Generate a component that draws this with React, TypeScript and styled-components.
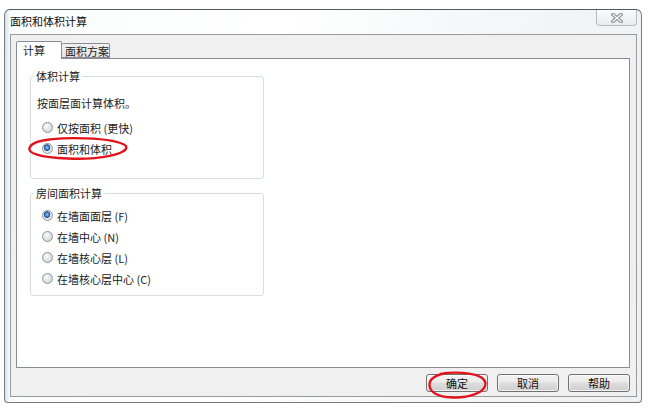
import React from 'react'
import styled, { createGlobalStyle } from 'styled-components'

const GlobalStyle = createGlobalStyle`
    html, body {
        margin: 0;
        padding: 0;
        background: #ffffff;
    }
    body {
        font-family: "Noto Sans CJK SC", "Liberation Sans", sans-serif;
        font-size: 11px;
        color: #1b1b1b;
    }
`

export default function App() {
    return (
        <Screen>
            <GlobalStyle />
            <Window>
                <TitleBar>
                    <Title>面积和体积计算</Title>
                    <CloseButton aria-label="关闭">
                        <svg width="12" height="10" viewBox="0 0 12 10">
                            <path d="M2 1.5 L10 8.5 M10 1.5 L2 8.5" stroke="#8a8e95" strokeWidth="3.6" strokeLinecap="square" />
                            <path d="M2 1.5 L10 8.5 M10 1.5 L2 8.5" stroke="#f6f6f6" strokeWidth="1.4" strokeLinecap="square" />
                        </svg>
                    </CloseButton>
                </TitleBar>
                <Panel>
                    <TabStrip>
                        <Tab $active>计算</Tab>
                        <Tab>面积方案</Tab>
                    </TabStrip>
                    <TabBody>
                        <GroupBox $height={110}>
                            <Legend>体积计算</Legend>
                            <Note>按面层面计算体积。</Note>
                            <RadioList $top={7}>
                                <RadioRow>
                                    <Radio />
                                    <span>仅按面积 (更快)</span>
                                </RadioRow>
                                <RadioRow>
                                    <Radio $checked />
                                    <span>面积和体积</span>
                                    <Mark $left={-9} $top={-1} $w={100} $h={23}>
                                        <svg width="100%" height="100%" viewBox="0 0 100 23" preserveAspectRatio="none">
                                            <path d="M8 5 C 30 -1, 88 0, 98 9 C 102 17, 70 23, 40 21.5 C 12 20.5, -2 16, 2 10 C 4 6, 12 3.5, 22 2.5" fill="none" stroke="#e3121b" strokeWidth="2.3" />
                                        </svg>
                                    </Mark>
                                </RadioRow>
                            </RadioList>
                        </GroupBox>
                        <GroupBox $height={110}>
                            <Legend>房间面积计算</Legend>
                            <RadioList $top={5}>
                                <RadioRow>
                                    <Radio $checked />
                                    <span>在墙面面层 (F)</span>
                                </RadioRow>
                                <RadioRow>
                                    <Radio />
                                    <span>在墙中心 (N)</span>
                                </RadioRow>
                                <RadioRow>
                                    <Radio />
                                    <span>在墙核心层 (L)</span>
                                </RadioRow>
                                <RadioRow>
                                    <Radio />
                                    <span>在墙核心层中心 (C)</span>
                                </RadioRow>
                            </RadioList>
                        </GroupBox>
                    </TabBody>
                    <ButtonRow>
                        <Button>
                            确定
                            <Mark $left={1} $top={-4} $w={59} $h={28}>
                                <svg width="100%" height="100%" viewBox="0 0 59 28" preserveAspectRatio="none">
                                    <path d="M12 3 C 30 0, 56 2, 57.5 12 C 58 22, 40 27, 25 26.5 C 8 26, 1 20, 1.5 13 C 2 7, 8 4, 18 2" fill="none" stroke="#e3121b" strokeWidth="2.3" />
                                </svg>
                            </Mark>
                        </Button>
                        <Button>取消</Button>
                        <Button>帮助</Button>
                    </ButtonRow>
                </Panel>
            </Window>
        </Screen>
    )
}

const Screen = styled.div`
    width: 652px;
    height: 410px;
    padding: 9px 0 0 4px;
    box-sizing: border-box;
`
const Window = styled.div`
    width: 638px;
    height: 394px;
    box-sizing: border-box;
    display: flex;
    flex-direction: column;
    padding: 0 4px 5px 5px;
    border: 1px solid #7a7a7a;
    border-top-color: #555a60;
    border-radius: 6px 6px 4px 4px;
    background:
        linear-gradient(90deg, rgba(170, 205, 240, 0.55) 0px, rgba(255, 255, 255, 0) 5px),
        linear-gradient(100deg, #fbfcfd 0%, #ffffff 40%, #f4f6f7 70%, #eef0f1 100%);
`
const TitleBar = styled.div`
    height: 24px;
    display: flex;
    justify-content: space-between;
    align-items: flex-start;
`
const Title = styled.div`
    align-self: center;
    padding-bottom: 3px;
    font-size: 11px;
    color: #111;
`
const CloseButton = styled.div`
    width: 41px;
    height: 16px;
    box-sizing: border-box;
    display: flex;
    align-items: center;
    justify-content: center;
    border: 1px solid #b7bcc2;
    border-top: none;
    border-radius: 0 0 4px 4px;
    background: linear-gradient(#fafbfc, #e9ecef);
`
const Panel = styled.div`
    flex: 1;
    display: flex;
    flex-direction: column;
    padding: 6px 6px 4px 5px;
    border: 1px solid #9a9a9a;
    background: #f0f0f0;
`
const TabStrip = styled.div`
    height: 17px;
    display: flex;
    align-items: flex-end;
    position: relative;
    z-index: 1;
`
const Tab = styled.div<{ $active?: boolean }>`
    box-sizing: border-box;
    display: flex;
    align-items: center;
    height: ${p => (p.$active ? 18 : 15)}px;
    margin-bottom: ${p => (p.$active ? -1 : 0)}px;
    padding: ${p => (p.$active ? '0 0 2px 6px' : '0 0 0 3px')};
    width: ${p => (p.$active ? 46 : 48)}px;
    border: 1px solid #898c95;
    border-bottom: ${p => (p.$active ? 'none' : '1px solid #898c95')};
    border-left: ${p => (p.$active ? '1px solid #898c95' : 'none')};
    border-radius: 2px 2px 0 0;
    background: ${p => (p.$active ? '#ffffff' : 'linear-gradient(#f2f2f2, #e4e4e4)')};
    line-height: 12px;
    font-size: 11px;
    white-space: nowrap;
    overflow: hidden;
`
const TabBody = styled.div`
    flex: 1;
    display: flex;
    flex-direction: column;
    gap: 7px;
    padding: 10px 0 0 13px;
    border: 1px solid #898c95;
    background: #ffffff;
`
const GroupBox = styled.fieldset<{ $height: number }>`
    box-sizing: border-box;
    width: 234px;
    height: ${p => p.$height}px;
    margin: 0;
    padding: 0 0 0 6px;
    border: 1px solid #d5dfe5;
    border-radius: 3px;
`
const Legend = styled.legend`
    margin-left: -3px;
    padding: 0 2px;
    line-height: 14px;
    font-size: 11px;
`
const Note = styled.div`
    margin-top: 13px;
    line-height: 14px;
`
const RadioList = styled.div<{ $top: number }>`
    display: flex;
    flex-direction: column;
    margin-top: ${p => p.$top}px;
`
const RadioRow = styled.div`
    position: relative;
    height: 21px;
    display: flex;
    align-items: center;
    gap: 4px;
    padding-left: 5px;
    white-space: nowrap;
`
const Radio = styled.span<{ $checked?: boolean }>`
    width: 11px;
    height: 11px;
    box-sizing: border-box;
    flex-shrink: 0;
    border-radius: 50%;
    border: 1px solid #8f9499;
    background: ${p =>
        p.$checked
            ? 'radial-gradient(circle at 45% 40%, #9cd0f2 0px, #3a7cc4 2px, #1d4f92 3px, #e9eaeb 3.6px, #d7d9dc 100%)'
            : 'radial-gradient(circle at 40% 35%, #ffffff 0px, #e6e7e8 3px, #cdd0d3 100%)'};
`
const Mark = styled.span<{ $left: number; $top: number; $w: number; $h: number }>`
    position: absolute;
    left: ${p => p.$left}px;
    top: ${p => p.$top}px;
    width: ${p => p.$w}px;
    height: ${p => p.$h}px;
    pointer-events: none;
`
const ButtonRow = styled.div`
    display: flex;
    justify-content: flex-end;
    gap: 9px;
    margin-top: 6px;
`
const Button = styled.div`
    position: relative;
    width: 62px;
    height: 18px;
    box-sizing: border-box;
    display: flex;
    align-items: center;
    justify-content: center;
    border: 1px solid #707070;
    border-radius: 3px;
    background: linear-gradient(#f2f2f2 0%, #ebebeb 45%, #dddddd 50%, #cfcfcf 100%);
    box-shadow: inset 0 0 0 1px rgba(255, 255, 255, 0.7);
    font-size: 11px;
    color: #111;
`
